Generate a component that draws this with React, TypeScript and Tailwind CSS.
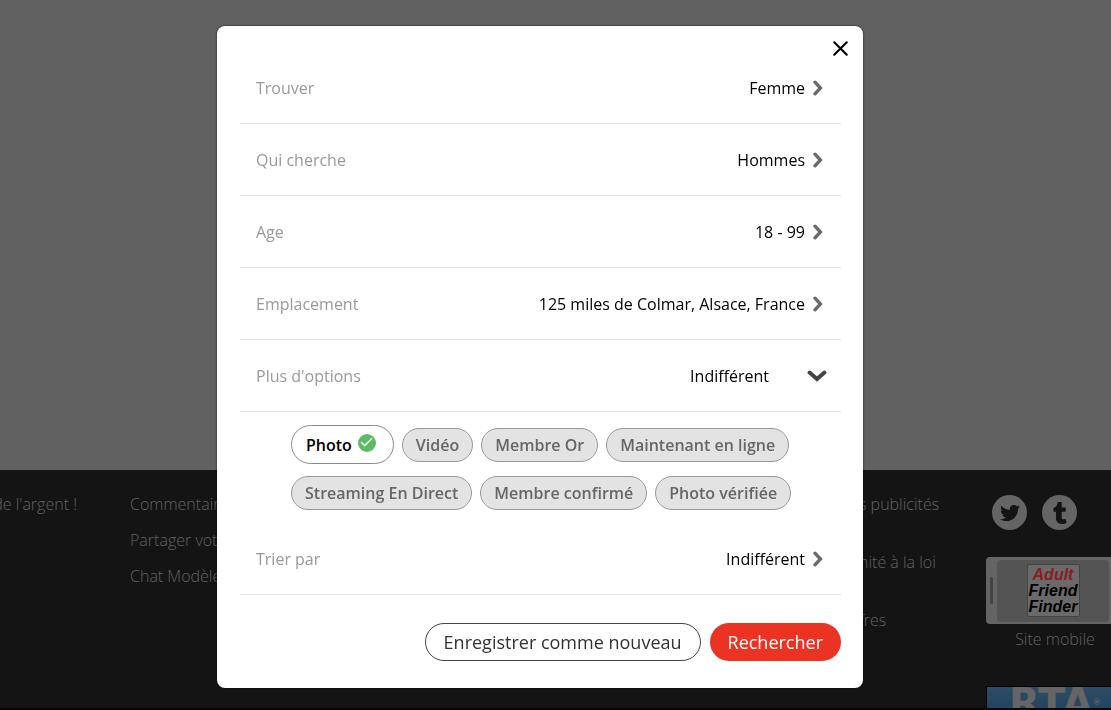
import { Check, X } from "lucide-react";
import { FaTumblr, FaTwitter } from "react-icons/fa";

// ─── Data ─────────────────────────────────────────────────────────────────────

const filters = [
  { label: "Trouver", value: "Femme" },
  { label: "Qui cherche", value: "Hommes" },
  { label: "Age", value: "18 - 99" },
  { label: "Emplacement", value: "125 miles de Colmar, Alsace, France" },
];

const optionRows = [
  ["Photo", "Vidéo", "Membre Or", "Maintenant en ligne"],
  ["Streaming En Direct", "Membre confirmé", "Photo vérifiée"],
];

const selected = ["Photo"];

// ─── Icons ────────────────────────────────────────────────────────────────────

function ChevronRight() {
  return (
    <svg width="10" height="16" viewBox="0 0 10 16" fill="none" aria-hidden="true">
      <path d="M2 2.2 7.4 8 2 13.8" stroke="#6b6b6b" strokeWidth="3.4" strokeLinecap="round" />
    </svg>
  );
}

function ChevronDown() {
  return (
    <svg width="20" height="12" viewBox="0 0 20 12" fill="none" aria-hidden="true">
      <path d="M2.6 2.6 10 9 17.4 2.6" stroke="#444444" strokeWidth="4" strokeLinecap="round" />
    </svg>
  );
}

// ─── Dialog parts ─────────────────────────────────────────────────────────────

function FilterRow({ label, value, open }: { label: string; value: string; open?: boolean }) {
  return (
    <button
      type="button"
      aria-expanded={open}
      className="flex h-18 w-full items-center border-b border-[#e4e4e4] pl-4 text-left"
    >
      <span className="flex-1 text-[#999999]">{label}</span>
      <span>{value}</span>
      {open ? (
        <span className="flex w-18 justify-end pr-3.5"><ChevronDown /></span>
      ) : (
        <span className="flex w-9 pl-2"><ChevronRight /></span>
      )}
    </button>
  );
}

function OptionPill({ label, active }: { label: string; active: boolean }) {
  if (active) {
    return (
      <button
        type="button"
        aria-pressed="true"
        className="flex h-[39px] items-center gap-1.5 rounded-full border border-[#8a8a8a] bg-white pl-3.5 pr-[17px] font-semibold text-black"
      >
        {label}
        <span className="mb-1 flex size-[18px] items-center justify-center rounded-full bg-[#5fba66]">
          <Check size={15} strokeWidth={2.4} className="text-white" />
        </span>
      </button>
    );
  }
  return (
    <button
      type="button"
      aria-pressed="false"
      className="flex h-[34px] items-center rounded-full border border-[#999999] bg-[#e3e3e3] px-[13px] font-semibold text-[#666666]"
    >
      {label}
    </button>
  );
}

function SearchDialog() {
  return (
    <div
      role="dialog"
      aria-label="Recherche"
      className="relative w-full max-w-[646px] rounded-lg bg-white pb-[27px] pl-[23px] pr-[22px] pt-[26px] text-base text-black shadow-[0_0_2px_rgba(0,0,0,0.8)]"
    >
      <button type="button" aria-label="Fermer" className="absolute right-2.5 top-2.5">
        <X size={25} strokeWidth={2} />
      </button>

      {filters.map((f) => (
        <FilterRow key={f.label} label={f.label} value={f.value} />
      ))}
      <FilterRow label="Plus d'options" value="Indifférent" open />

      <div className="flex flex-col gap-3 pl-[51px] pt-[13px]">
        {optionRows.map((row) => (
          <div key={row[0]} className="flex items-center gap-2">
            {row.map((o) => (
              <OptionPill key={o} label={o} active={selected.includes(o)} />
            ))}
          </div>
        ))}
      </div>

      <div className="pt-[13px]">
        <FilterRow label="Trier par" value="Indifférent" />
      </div>

      <div className="flex justify-end gap-[9px] pt-7 text-lg">
        <button type="button" className="h-[38px] rounded-full border border-[#444444] px-[18px] text-[#333333]">
          Enregistrer comme nouveau
        </button>
        <button type="button" className="h-[38px] rounded-full bg-[#ea3323] px-[18px] text-white">
          Rechercher
        </button>
      </div>
    </div>
  );
}

// ─── Footer ───────────────────────────────────────────────────────────────────

function FooterLink({ children }: { children: string }) {
  return <a href="#" className="block whitespace-nowrap leading-[22px]">{children}</a>;
}

function Footer() {
  return (
    <footer className="flex flex-1 overflow-hidden border-b-2 border-[#0a0709] bg-[#141414] pt-[23px] font-light text-[#626262]">
      <div className="flex w-[77px] shrink-0 justify-end">
        <FooterLink>de l'argent !</FooterLink>
      </div>
      <div className="ml-[53px] flex flex-1 flex-col gap-3.5">
        <FooterLink>Commentaires</FooterLink>
        <FooterLink>Partager votre</FooterLink>
        <FooterLink>Chat Modèles</FooterLink>
      </div>
      <div className="flex w-[127px] shrink-0 flex-col gap-9">
        <FooterLink>s publicités</FooterLink>
        <FooterLink>nité à la loi</FooterLink>
        <FooterLink>fres</FooterLink>
      </div>
      <div className="w-[125px] shrink-0">
        <div className="flex gap-[15px] pl-1.5 pt-0.5">
          <a href="#" aria-label="Twitter" className="flex size-[35px] items-center justify-center rounded-full bg-[#656565] text-[#141414]">
            <FaTwitter size={20} />
          </a>
          <a href="#" aria-label="Tumblr" className="flex size-[35px] items-center justify-center rounded-full bg-[#656565] text-[#141414]">
            <FaTumblr size={22} />
          </a>
        </div>

        <a href="#" className="mt-[27px] block">
          <div className="flex h-[67px] w-[138px] items-center gap-1 rounded bg-[#646464] pl-1">
            <div className="h-[27px] w-[3px] rounded-full bg-[#444444]" />
            <div className="flex h-[62px] w-[112px] items-center justify-center rounded bg-[#545454]">
              <div className="flex h-[53px] w-[53px] flex-col items-center justify-center rounded-xs border border-[#444444] bg-[#6a6a6a] font-['Liberation_Sans_Narrow','Liberation_Sans',sans-serif] text-base font-bold italic leading-4 text-black">
                <span className="text-[#8a1c1e]">Adult</span>
                <span>Friend</span>
                <span>Finder</span>
              </div>
            </div>
          </div>
          <span className="block w-[138px] pt-1 text-center leading-[22px]">Site mobile</span>
        </a>

        <a href="#" className="mt-9 flex h-[50px] w-[138px] justify-center border border-black bg-linear-to-b from-[#2c4d66] to-[#1c3a54] font-['DejaVu_Sans',sans-serif] text-[40px] font-bold leading-8 text-[#656565]">
          RTA<span className="pt-1 text-[8px] leading-6">®</span>
        </a>
      </div>
    </footer>
  );
}

// ─── Page ─────────────────────────────────────────────────────────────────────

export default function App() {
  return (
    <div className="flex h-screen flex-col overflow-hidden bg-[#616161] font-['Open_Sans',sans-serif] text-base">
      <main className="h-[470px] shrink-0" />
      <Footer />
      <div className="fixed inset-0 flex items-start justify-center pr-[31px] pt-[26px]">
        <SearchDialog />
      </div>
    </div>
  );
}
